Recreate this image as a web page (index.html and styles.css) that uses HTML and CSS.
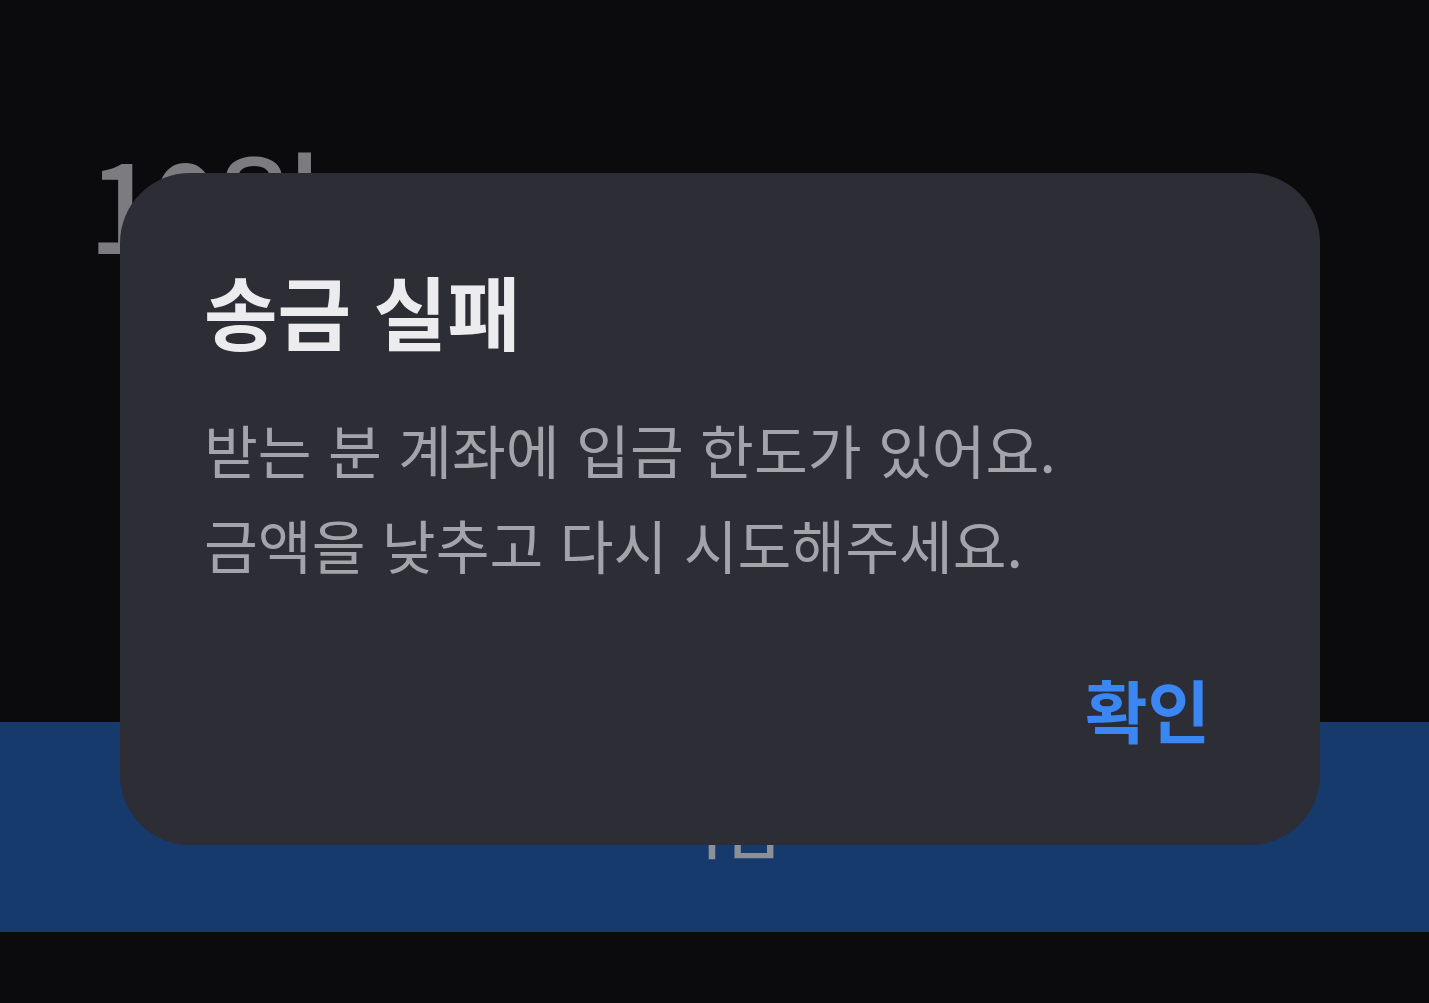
FILE: index.html
```html
<!DOCTYPE html>
<html lang="ko">
<head>
    <meta charset="UTF-8" />
    <meta name="viewport" content="width=device-width, initial-scale=1" />
    <title>송금</title>
    <link rel="stylesheet" href="styles.css">
</head>
<body>

<div class="screen">
    <div class="amount">10원</div>
    <button class="next-btn" disabled>다음</button>
</div>

<div class="overlay">
    <div class="dialog">
        <h2 class="dialog-title">송금 실패</h2>
        <p class="dialog-text">받는 분 계좌에 입금 한도가 있어요.<br>금액을 낮추고 다시 시도해주세요.</p>
        <div class="dialog-actions">
            <button class="confirm-btn">확인</button>
        </div>
    </div>
</div>

</body>
</html>
```

FILE: styles.css
```css
body {
    font-family: "Noto Sans CJK KR", "Noto Sans", sans-serif;
    background: #0b0b0d;
    margin: 0;
    height: 1003px;
    overflow: hidden;
}
.screen {
    display: flex;
    flex-direction: column;
    height: 100%;
}
.amount {
    font-size: 122px;
    font-weight: 500;
    color: #7c7c80;
    padding: 140px 0 0 88px;
    line-height: 1;
    height: 722px;
    box-sizing: border-box;
    flex-shrink: 0;
    letter-spacing: -7px;
}
.next-btn {
    height: 210px;
    flex-shrink: 0;
    border: none;
    background: #173a6d;
    color: #8c9099;
    font-family: inherit;
    font-size: 62px;
    font-weight: 500;
    padding: 0 0 0 22px;
}
.overlay {
    position: absolute;
    inset: 0;
}
.dialog {
    position: absolute;
    left: 120px;
    top: 173px;
    width: 1200px;
    height: 672px;
    box-sizing: border-box;
    background: #2d2d35;
    border-radius: 70px;
    padding: 88px 110px 0 84px;
    display: flex;
    flex-direction: column;
}
.dialog-title {
    margin: 0;
    font-size: 80px;
    font-weight: 700;
    color: #ececee;
    line-height: 1.2;
}
.dialog-text {
    margin: 44px 0 0;
    font-size: 58.5px;
    font-weight: 400;
    color: #a3a3a9;
    line-height: 95px;
}
.dialog-actions {
    display: flex;
    justify-content: flex-end;
    margin-top: 68px;
}
.confirm-btn {
    background: none;
    border: none;
    padding: 0;
    font-family: inherit;
    font-size: 68px;
    font-weight: 700;
    color: #3a86f2;
    cursor: pointer;
}
```
